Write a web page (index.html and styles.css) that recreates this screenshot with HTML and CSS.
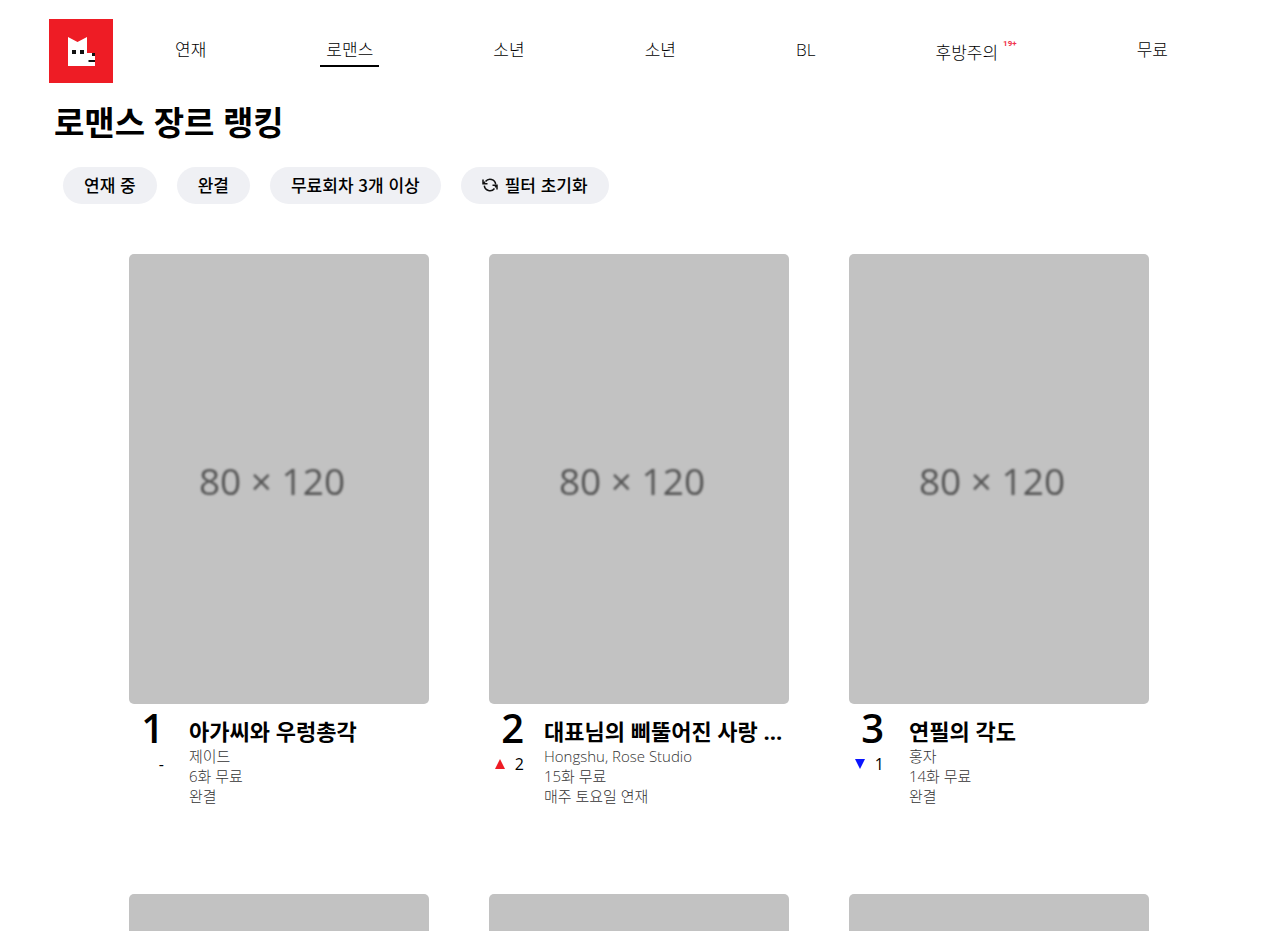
FILE: index.html
```html
<!DOCTYPE html>
<html lang="ko">
<head>
<meta charset="utf-8">
<title>로맨스 장르 랭킹</title>
<link rel="stylesheet" href="styles.css">
</head>
<body>
<header class="header">
  <a class="logo" href="#" aria-label="홈">
    <svg viewBox="0 0 64 64" width="64" height="64" aria-hidden="true">
      <rect width="64" height="64" fill="#ee1c25"/>
      <path d="M19 18l9.500 5 9.500-5v16h8v13H19z" fill="#fff"/>
      <path d="M23 31h4v4h-4zM31 31h4v4h-4zM43 34h3v3h-3zM39.500 41H46v2h-6.500z" fill="#111"/>
    </svg>
  </a>
  <nav class="nav">
    <a class="nav-link" href="#">연재</a>
    <a class="nav-link nav-link-active" href="#" aria-current="page">로맨스</a>
    <a class="nav-link" href="#">소년</a>
    <a class="nav-link" href="#">소년</a>
    <a class="nav-link" href="#">BL</a>
    <a class="nav-link nav-link-adult" href="#">후방주의 <span class="age">19+</span></a>
    <a class="nav-link" href="#">무료</a>
  </nav>
</header>
<main>
  <h1 class="page-title">로맨스 장르 랭킹</h1>
  <div class="filters">
    <button class="filter" type="button">연재 중</button>
    <button class="filter" type="button">완결</button>
    <button class="filter" type="button">무료회차 3개 이상</button>
    <button class="filter" type="button">
      <svg viewBox="0 0 16 16" width="16" height="16" fill="none" stroke="#111" stroke-width="1.500" aria-hidden="true">
        <path d="M1 2.500v4.200h4.500M1.200 6.500l1.800-1.700M15 12.500V8.300h-4.500M14.800 8.500L13 10.200"/>
        <path d="M3.500 4.500a5.700 5.700 0 0 1 10.200 2.800M12.500 11.500A5.700 5.700 0 0 1 2.300 8.700"/>
      </svg>
      필터 초기화
    </button>
  </div>
  <section class="grid">
    <article class="card">
      <div class="cover"><span class="cover-size">80 × 120</span></div>
      <div class="info">
        <div class="rank"><strong class="rank-number">1</strong><div class="change"><span>-</span></div></div>
        <div class="details">
          <h2 class="title">아가씨와 우렁총각</h2>
          <p class="meta">제이드</p><p class="meta">6화 무료</p><p class="meta">완결</p>
        </div>
      </div>
    </article>
    <article class="card">
      <div class="cover"><span class="cover-size">80 × 120</span></div>
      <div class="info info-long">
        <div class="rank"><strong class="rank-number">2</strong><div class="change"><svg width="10" height="10" viewBox="0 0 10 10" aria-hidden="true"><path d="M5 0l5 10H0z" fill="#ee1c25"/></svg><span>2</span></div></div>
        <div class="details">
          <h2 class="title">대표님의 삐뚤어진 사랑 ...</h2>
          <p class="meta">Hongshu, Rose Studio</p><p class="meta">15화 무료</p><p class="meta">매주 토요일 연재</p>
        </div>
      </div>
    </article>
    <article class="card">
      <div class="cover"><span class="cover-size">80 × 120</span></div>
      <div class="info">
        <div class="rank"><strong class="rank-number">3</strong><div class="change"><svg width="10" height="10" viewBox="0 0 10 10" aria-hidden="true"><path d="M0 0h10L5 10z" fill="#0a14ff"/></svg><span>1</span></div></div>
        <div class="details">
          <h2 class="title">연필의 각도</h2>
          <p class="meta">홍자</p><p class="meta">14화 무료</p><p class="meta">완결</p>
        </div>
      </div>
    </article>
    <article class="card"><div class="cover"></div></article>
    <article class="card"><div class="cover"></div></article>
    <article class="card"><div class="cover"></div></article>
  </section>
</main>
</body>
</html>
```

FILE: styles.css
```css
* {
  box-sizing: border-box;
}

body {
  margin: 0;
  height: 100vh;
  overflow: hidden;
  background: #fff;
  color: #000;
  font-family: "Open Sans", "Noto Sans CJK KR", sans-serif;
  font-size: 16px;
}

.header {
  display: flex;
  align-items: center;
  padding: 19px 102px 0 49px;
}

.logo,
.logo svg {
  display: block;
}

.nav {
  display: flex;
  flex: 1;
  align-items: flex-start;
  justify-content: space-between;
  margin-left: 56px;
  padding-top: 2px;
}

.nav-link {
  padding: 0 6px;
  border-bottom: 2px solid transparent;
  color: #000;
  font-size: 17px;
  font-weight: 300;
  line-height: 30px;
  text-decoration: none;
}

.nav-link-active {
  border-color: #000;
}

.nav-link-adult {
  display: flex;
  gap: 5px;
  padding-top: 3px;
}

.age {
  color: #f0324b;
  font-family: Roboto, sans-serif;
  font-size: 8px;
  font-weight: 700;
  line-height: 12px;
}

.page-title {
  margin: 16px 54px 0;
  font-size: 33px;
  font-weight: 700;
  line-height: 48px;
}

.filters {
  display: flex;
  flex-wrap: wrap;
  gap: 20px;
  padding: 20px 63px 0;
}

.filter {
  display: flex;
  align-items: center;
  gap: 7px;
  height: 37px;
  padding: 0 21px 2px;
  border: 0;
  border-radius: 20px;
  background: #eff0f4;
  color: #000;
  font-family: "Noto Sans CJK KR", sans-serif;
  font-size: 17px;
  font-weight: 500;
}

.grid {
  display: grid;
  grid-template-columns: repeat(auto-fill, 300px);
  justify-content: center;
  gap: 90px 60px;
  padding: 50px 60px 0 62px;
}

.cover {
  display: flex;
  align-items: center;
  justify-content: center;
  aspect-ratio: 2 / 3;
  border-radius: 5px;
  background: #c2c2c2;
}

.cover-size {
  padding: 2px 14px 0 0;
  color: #555;
  filter: blur(1px);
  font-size: 37px;
}

.info {
  display: flex;
  gap: 25px;
  height: 100px;
}

.info-long {
  gap: 20px;
}

.rank {
  width: 35px;
  padding-left: 5px;
}

.rank-number {
  display: block;
  font-size: 40px;
  font-weight: 600;
  line-height: 48px;
  text-align: right;
}

.change {
  display: flex;
  align-items: center;
  justify-content: flex-end;
  gap: 10px;
  padding-top: 2px;
  line-height: 20px;
}

.details {
  min-width: 0;
  padding-top: 12px;
}

.title {
  margin: 0;
  overflow: hidden;
  font-size: 22px;
  font-weight: 700;
  line-height: 30px;
  text-overflow: ellipsis;
  white-space: nowrap;
}

.meta {
  margin: 0;
  color: #333;
  font-size: 15px;
  font-weight: 300;
  line-height: 20px;
}
```
